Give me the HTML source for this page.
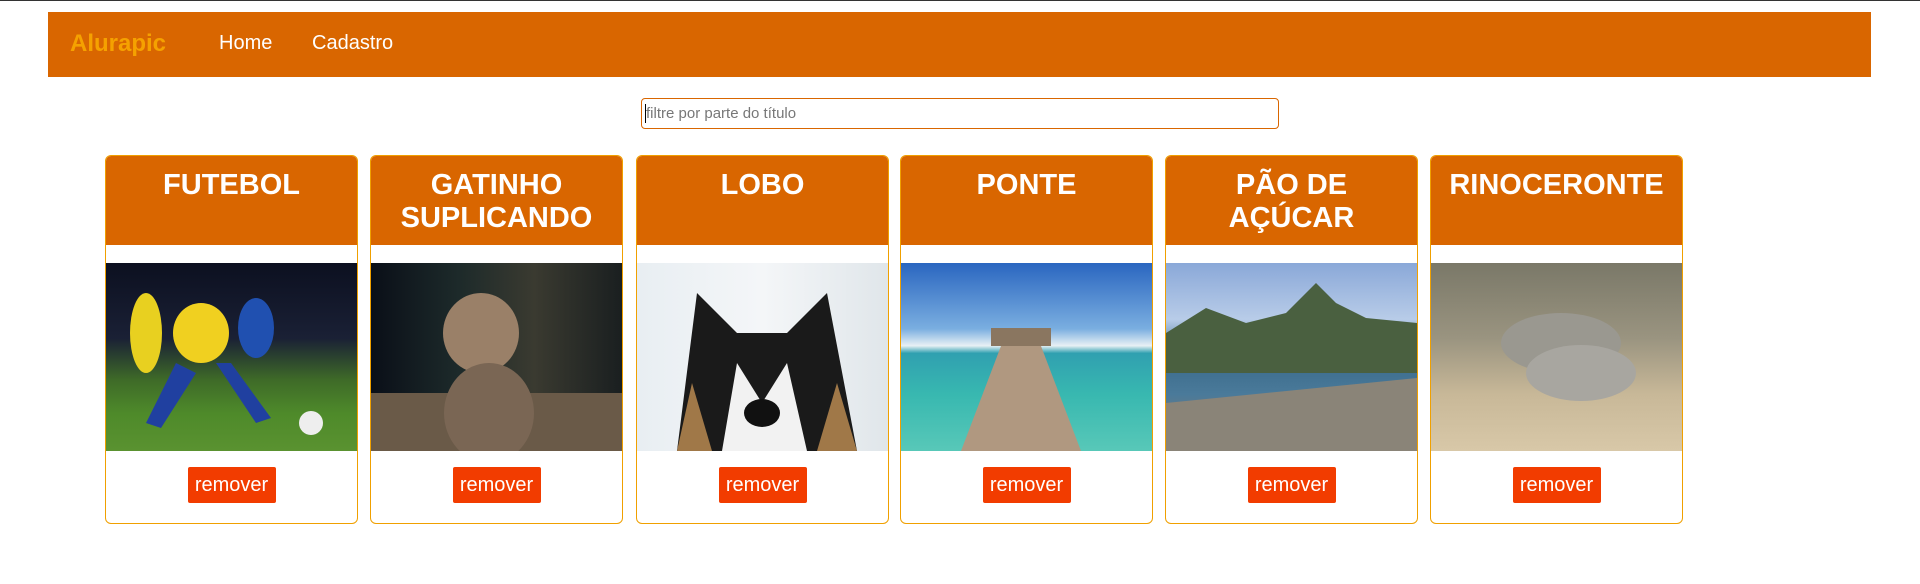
<!DOCTYPE html>
<html><head><meta charset="utf-8"><style>
*{box-sizing:border-box;margin:0;padding:0}
body{width:1920px;height:584px;background:#fff;font-family:"Liberation Sans",Arial,sans-serif;position:relative;overflow:hidden;border-top:1px solid #333}
.nav{position:absolute;left:48px;top:11px;width:1823px;height:65px;background:#d96600}
.brand{position:absolute;left:22px;top:18px;font-size:24px;font-weight:bold;color:#f5a100}
.nav a{position:absolute;top:20px;font-size:20px;color:#fff}
.inp{position:absolute;left:641px;top:97px;width:638px;height:31px;border:1px solid #d96600;border-radius:4px;font-size:15px;color:#777;padding:6px 4px;}
.inp:before{content:"";position:absolute;left:3px;top:5px;width:1px;height:19px;background:#000}
.card{position:absolute;top:154px;width:253px;height:369px;border:1px solid #f0a000;border-radius:6px;overflow:hidden}
.hd{height:89px;background:#d96600;color:#fff;font-weight:bold;font-size:29px;text-align:center;line-height:33px;padding-top:13px}
.im{position:absolute;left:0;right:0;top:107px;height:188px}
.btn{position:absolute;left:50%;margin-left:-44px;top:311px;width:88px;height:36px;background:#f23c00;color:#fff;font-size:20px;line-height:36px;text-align:center;border-radius:2px}
</style></head><body>
<div class="nav"><div class="brand">Alurapic</div><a style="left:171px">Home</a><a style="left:264px">Cadastro</a></div>
<div class="inp">filtre por parte do título</div>

<div class="card" style="left:105px"><div class="hd">FUTEBOL</div>
<div class="im" style="background:linear-gradient(180deg,#0c1020 0%,#1a2035 40%,#3e6a28 62%,#4e8a2a 80%,#5a9230 100%)">
<svg width="251" height="188"><ellipse cx="40" cy="70" rx="16" ry="40" fill="#e8d020"/><ellipse cx="95" cy="70" rx="28" ry="30" fill="#f0d020"/><ellipse cx="150" cy="65" rx="18" ry="30" fill="#2050b0"/><path d="M70 100 L40 160 L55 165 L90 110Z" fill="#2040a0"/><path d="M110 100 L150 160 L165 155 L125 100Z" fill="#2040a0"/><circle cx="205" cy="160" r="12" fill="#eee"/></svg></div>
<div class="btn">remover</div></div>

<div class="card" style="left:370px"><div class="hd">GATINHO<br>SUPLICANDO</div>
<div class="im" style="background:linear-gradient(90deg,#0a0f18 0%,#1d2a2a 35%,#3a3a30 65%,#1a1f20 100%)">
<svg width="251" height="188"><rect x="0" y="130" width="251" height="58" fill="#6a5a48"/><ellipse cx="110" cy="70" rx="38" ry="40" fill="#9a8068"/><ellipse cx="118" cy="150" rx="45" ry="50" fill="#7a6654"/></svg></div>
<div class="btn">remover</div></div>

<div class="card" style="left:636px"><div class="hd">LOBO</div>
<div class="im" style="background:linear-gradient(90deg,#e8eef2,#f4f6f8 50%,#e0e6ea)">
<svg width="251" height="188"><path d="M40 188 L60 30 L100 70 L150 70 L190 30 L220 188Z" fill="#1a1a1a"/><path d="M85 188 L100 100 L125 140 L150 100 L170 188Z" fill="#f2f2f2"/><ellipse cx="125" cy="150" rx="18" ry="14" fill="#111"/><path d="M40 188 L55 120 L75 188Z" fill="#a07848"/><path d="M220 188 L200 120 L180 188Z" fill="#a07848"/></svg></div>
<div class="btn">remover</div></div>

<div class="card" style="left:900px"><div class="hd">PONTE</div>
<div class="im" style="background:linear-gradient(180deg,#2a66c0 0%,#7aaee0 35%,#e8f0f4 44%,#30a0b0 48%,#38b8b0 70%,#58c8b8 100%)">
<svg width="251" height="188"><rect x="90" y="65" width="60" height="18" fill="#8a7660"/><path d="M100 83 L140 83 L180 188 L60 188Z" fill="#b09880"/></svg></div>
<div class="btn">remover</div></div>

<div class="card" style="left:1165px"><div class="hd">PÃO DE<br>AÇÚCAR</div>
<div class="im" style="background:linear-gradient(180deg,#8aa8d8 0%,#b8cce8 30%,#3a6a8a 50%,#4a7a9a 70%,#707a80 85%,#8a8a88 100%)">
<svg width="251" height="188"><path d="M0 70 L40 45 L80 60 L120 50 L150 20 L170 40 L200 55 L251 60 L251 110 L0 110Z" fill="#4a6040"/><path d="M0 140 L251 115 L251 188 L0 188Z" fill="#8a8478"/></svg></div>
<div class="btn">remover</div></div>

<div class="card" style="left:1430px"><div class="hd">RINOCERONTE</div>
<div class="im" style="background:linear-gradient(180deg,#7a7868 0%,#9a9480 40%,#c8b898 70%,#d8c8a8 100%)">
<svg width="251" height="188"><ellipse cx="130" cy="80" rx="60" ry="30" fill="#9a9890"/><ellipse cx="150" cy="110" rx="55" ry="28" fill="#a8a6a0"/></svg></div>
<div class="btn">remover</div></div>
</body></html>
